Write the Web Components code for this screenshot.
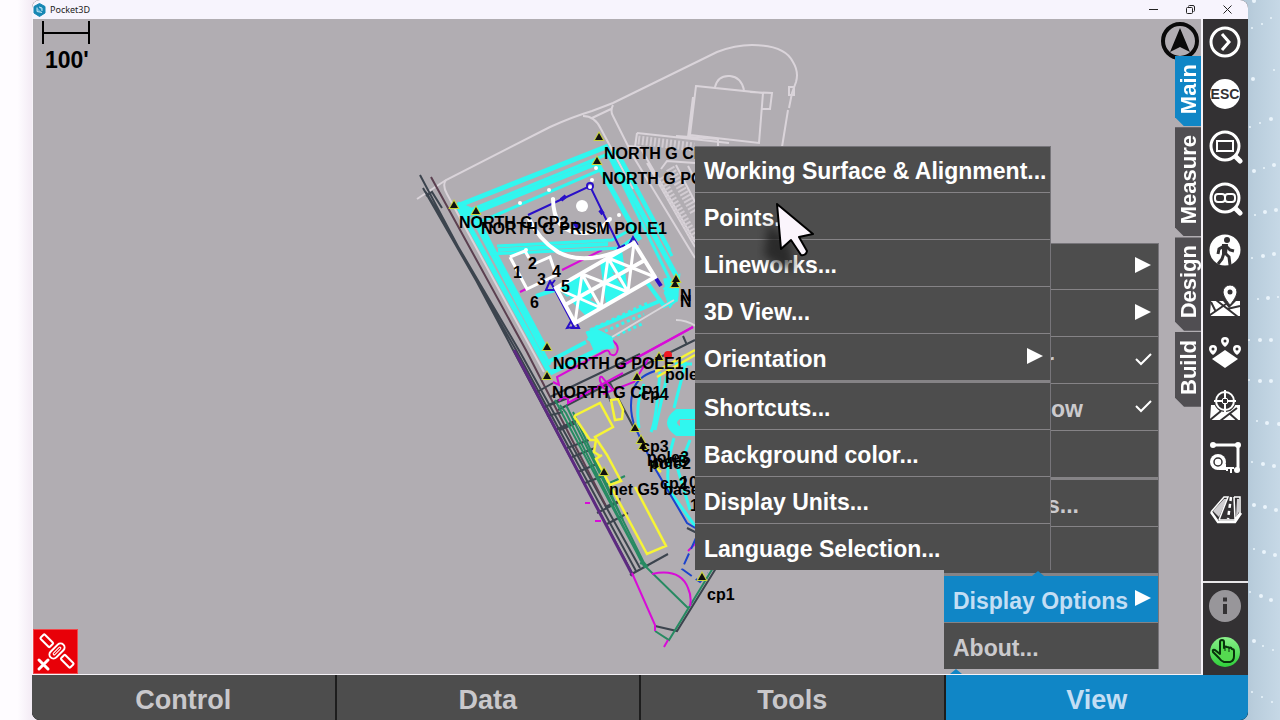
<!DOCTYPE html>
<html lang="en">
<head>
<meta charset="utf-8">
<title>Pocket3D</title>
<style>
  html, body { margin: 0; height: 100%; }
  body { font-family: "Liberation Sans", Arial, sans-serif; overflow: hidden; }
</style>
</head>
<body>
<p3-desktop>
  <p3-window>
    <p3-titlebar slot="title">Pocket3D</p3-titlebar>
    <p3-map slot="main">
      <p3-compass slot="compass"></p3-compass>
      <p3-side-tabs slot="tabs">
        <p3-side-tab active>Main</p3-side-tab>
        <p3-side-tab>Measure</p3-side-tab>
        <p3-side-tab>Design</p3-side-tab>
        <p3-side-tab>Build</p3-side-tab>
      </p3-side-tabs>
      <p3-gnss slot="status"></p3-gnss>
      <p3-menu slot="menu" label="View">
        <p3-item mark="arrow"></p3-item>
        <p3-item mark="arrow"></p3-item>
        <p3-item mark="check" class="under r">r</p3-item>
        <p3-item mark="check" class="under">ow</p3-item>
        <p3-item></p3-item>
        <p3-item section class="under s">s...</p3-item>
        <p3-item></p3-item>
        <p3-item section active mark="arrow">Display Options</p3-item>
        <p3-item>About...</p3-item>
      </p3-menu>
      <p3-menu slot="submenu" label="Display Options" bright>
        <p3-item>Working Surface &amp; Alignment...</p3-item>
        <p3-item>Points...</p3-item>
        <p3-item>Lineworks...</p3-item>
        <p3-item>3D View...</p3-item>
        <p3-item mark="arrow">Orientation</p3-item>
        <p3-item section>Shortcuts...</p3-item>
        <p3-item>Background color...</p3-item>
        <p3-item>Display Units...</p3-item>
        <p3-item>Language Selection...</p3-item>
        <p3-cursor slot="over"></p3-cursor>
      </p3-menu>
    </p3-map>
    <p3-toolbar slot="side">
      <p3-tool icon="next" label="Next"></p3-tool>
      <p3-tool icon="esc" label="Escape"></p3-tool>
      <p3-tool icon="zoomrect" label="Zoom window"></p3-tool>
      <p3-tool icon="zoomall" label="Zoom extents"></p3-tool>
      <p3-tool icon="walk" label="Follow me"></p3-tool>
      <p3-tool icon="mappin" label="Map point"></p3-tool>
      <p3-tool icon="pins" label="Surface points"></p3-tool>
      <p3-tool icon="target" label="Stake target"></p3-tool>
      <p3-tool icon="tape" label="Measure"></p3-tool>
      <p3-tool icon="road" label="Road"></p3-tool>
      <p3-tool icon="info" label="Information" slot="foot"></p3-tool>
      <p3-tool icon="hand" label="Touch mode" slot="foot"></p3-tool>
    </p3-toolbar>
    <p3-tabbar slot="foot">
      <p3-tab>Control</p3-tab>
      <p3-tab>Data</p3-tab>
      <p3-tab>Tools</p3-tab>
      <p3-tab active>View</p3-tab>
    </p3-tabbar>
  </p3-window>
</p3-desktop>

<script>
const define = (name, html, setup) => {
  const t = document.createElement('template');
  t.innerHTML = html;
  customElements.define(name, class extends HTMLElement {
    constructor() {
      super();
      this.attachShadow({ mode: 'open' }).append(t.content.cloneNode(true));
    }
    connectedCallback() { if (setup) setup(this, this.shadowRoot); }
  });
};

/* Wallpaper behind the window */
define('p3-desktop', `
<style>
  :host { display: block; position: relative; min-height: 100vh; background: #fdf9fe; }
  .right { position: absolute; inset: 0 0 0 auto; width: 44px;
    background: linear-gradient(90deg, #abc1d3, #b9cddc 40%, #c6d8e6); }
  .left { position: absolute; inset: 0 auto 0 0; width: 44px;
    background: linear-gradient(90deg, #fefcff 40%, #f2eaf4 75%); }
  slot { display: block; position: relative; padding: 0 32px; }
</style>
<div class="left"></div>
<svg class="right" viewBox="0 0 44 720" preserveAspectRatio="xMinYMin slice" fill="#eaf4fb" aria-hidden="true"></svg>
<slot></slot>`, (el, root) => {
  const dots = [[35,18,1],[16,28,1],[26,24,1],[38,70,1],[17,79,2],[14,127,1],[24,123,1],[35,119,2],[18,171,2],[28,168,1],[38,165,2],
    [18,1,2],[19,215,1],[29,212,2],[40,210,2],[16,258,1],[27,256,2],[38,254,2],[22,299,1],[32,298,2],[42,297,1],
    [13,340,1],[24,340,2],[35,340,2],[13,380,1],[24,381,2],[35,381,2],[21,421,1],[31,423,2],[43,424,2],
    [16,462,1],[27,464,2],[38,466,2],[18,505,2],[29,507,2],[40,510,2],[18,549,1],[28,552,2],[39,555,2],
    [14,592,1],[25,596,2],[35,600,2],[18,641,2],[27,646,1],[37,650,1],[16,692,1],[26,697,1],[36,702,1]];
  root.querySelector('svg').innerHTML = dots.map(d => `<circle cx="${d[0]}" cy="${d[1]}" r="${d[2]}"/>`).join('');
});

/* Application window: title, work area, tool column, tab bar */
define('p3-window', `
<style>
  :host { display: grid; min-height: 100vh; grid-template: auto 1fr auto / 1fr 45px;
    border-radius: 8px; overflow: hidden; background: #303030; }
  ::slotted([slot=title]), ::slotted([slot=foot]) { grid-column: 1 / -1; }
</style>
<slot name="title"></slot><slot name="main"></slot><slot name="side"></slot><slot name="foot"></slot>`);

define('p3-titlebar', `
<style>
  :host { display: flex; align-items: center; height: 19px; background: #f7f4fd; color: #222;
    font: 9px/18px "Noto Sans", "Open Sans", sans-serif; }
  .logo { margin: 0 4px 0 1px; }
  .grow { flex: 1; }
  button { width: 37px; height: 18px; padding: 0; border: 0; background: none; display: grid; place-items: center; }
  .end { display: flex; padding-right: 2px; }
  svg { display: block; fill: none; stroke: #222; }
</style>
<svg class="logo" width="13" height="14" viewBox="0 0 13 14" stroke="none"><path d="M6.500 .5 12 3.500v6.500L6.500 13.500 1 10V3.500z" fill="#1787b4" stroke="#1787b4"/><path d="M4 4.500v4l5 1M6 4l3 1v3" stroke="#bfe2f1" fill="#5fb4d8"/></svg>
<span><slot></slot></span><span class="grow"></span>
<div class="end">
<button aria-label="Minimize"><svg width="9" height="9"><path d="M0 4.500h9"/></svg></button>
<button aria-label="Restore"><svg width="9" height="9"><rect x=".5" y="2.500" width="6" height="6" rx="1"/><path d="M2.500 1.500q0-1 1-1h3.500q1.500 0 1.500 1.500v3.500q0 1-1 1"/></svg></button>
<button aria-label="Close"><svg width="9" height="9"><path d="M.5 .5l8 8M8.500 .5l-8 8"/></svg></button>
</div>`);

define('p3-map', `
<style>
  :host { display: block; position: relative; background: #b1adb2; overflow: hidden;
    border: solid #f6f3f8; border-width: 0 2px 1px 1px; }
  svg { display: block; position: absolute; left: 0; top: 0; }
  slot[name]::slotted(*) { position: absolute; }
  ::slotted([slot=compass]) { right: 2px; top: 3px; }
  ::slotted([slot=tabs]) { right: 0; top: 37px; }
  ::slotted([slot=status]) { left: 0; bottom: 0; }
  ::slotted([slot=menu]) { right: 42px; bottom: 5px; width: 215px; }
  ::slotted([slot=submenu]) { right: 150px; bottom: 104px; width: 356px; }
  .notch { position: absolute; width: 0; height: 0; border: 6px solid transparent; border-top: 0; border-bottom: 5px solid #1086c6; }
  .n1 { right: 239px; bottom: 0; }
  .n2 { right: 157px; bottom: 98px; }
  text { font: bold 16px "Liberation Sans", Arial, sans-serif; fill: #000; stroke: none; }
  .scale text { font-size: 23px; }
</style>
<svg width="780" height="655" viewBox="33 19 780 655" fill="none" role="img" aria-label="Site drawing">
  <g class="scale" stroke="#000" stroke-width="2"><path d="M43 21v23M89 21v23M43 33h46"/><text x="45" y="68">100'</text></g>

  <g stroke="#dad4da" stroke-width="2">
    <path d="M417 199 446 180 550 127Q572 117 592 111L613 103 717 52Q735 45 752 45 785 45 793 62 799 72 796 82L792 93 789 108M788 110 782 147"/>
    <path d="M789 87h5v8h-5zM583 116q12 0 18 13l32 60M592 118l19-9M613 105q-3 6 0 11l20 40 62 102" />
    <path d="M446 180q-4 5 1 14l97 178M696 86l67 7-4 50-69-8zM693 97l-5 40M750 92l22 1-2 16h-8M715 87q3-12 15-11 11 1 14 14"/>
    <path d="M637 133l92 10M637 133l-2 14M676 136l42 3v8M628 146l12 1 55 95M647 163l48 84"/>
    <path d="M661 169l6-8 28 2M676 165l19 37M688 166l7 13" />
  </g>
  <g stroke="#d2ccd2" stroke-width="9" stroke-dasharray="2 2"><path d="M638 140l56 7M660 178l36 62M670 168l25 45"/></g>

  <g stroke="#3c444e" stroke-width="2">
    <path d="M420 175 512 348 632 573M423 188 516 350 636 571M426 192 520 352 640 568"/>
    <path stroke="#5b4050" d="M431 177 527 352 606 506"/>
    <path d="M426 196l6-4 10 16" />
    <path d="M537 392l16-9M543 408l24-12M547 416l16-4M555 430l22-10M560 430l16-7M567 448l22-8M572 457l23-9M578 472l21-9M585 483l18-7M597 513l22-11 1-4M607 524l21-11M605 507l14-6"/>
    <path d="M550 405 610 382 695 340M550 397 640 354M610 383 635 430M558 410l52-27M683 336l4 9M605 388l6 14"/>
    <path d="M630 575 668 554M655 626l22 5 41-66M687 528l12 6"/>
  </g>
  <path d="M514 350 633 576" stroke="#5c2a80" stroke-width="3"/>
  <g stroke="#278a62" stroke-width="2">
    <path d="M560 405l6 8 75 148M566 405l80 162 42 41M573 412l50 108M655 631l14 9 44-72M555 400l90 168M605 485l20-9M640 563l6 2-4-5"/>
  </g>
  <g stroke="#d80cd8" stroke-width="2">
    <path d="M632 573 655 625 655 631M562 270 602 250M520 292l8-4M652 574q28-6 36 14 4 9 2 18M668 640l-4 7M697 542l-9 9M590 503h-5M601 521h-6"/>
    <path d="M693 327 618 368 M553 382l6 3-2-8 48-26q4-2 5 3 5 3 7-2 3-6-5-12M613 390l-11-13q-3-1-2 4l4 8M559 401q4-6 9-2v4l55-30M603 394l31-12 15-24"/>
    <path d="M693 327 618 368"/>
  </g>

  <g stroke="#30f7ef">
    <path stroke-width="5" d="M457 206 606 147 677 277M475 212 597 163 640 240M458 206 550 373M474 212 493 250 546 350M550 373 600 349"/>
    <path stroke-width="3" d="M463 213 608 154 672 284M472 217 550 365M480 222 600 170M615 150 672 256M622 160l48 90M630 230l-18 10-115 6M490 254l130-6 16-12"/>
    <path stroke-width="4" d="M548 362l38-20M498 250l110-6M536 296l28-9M592 330l70-30M664 290l14-12-2 22-12 6-18-25"/>
    <path stroke-width="6" d="M666 278l6 26M588 337l16 8M560 290l30-14M580 305l60-30"/>
    <path stroke-width="3" stroke-dasharray="3 3" d="M590 330l60-28M594 336l50-22M606 340l36-16"/>
    <path fill="#30f7ef" d="M586 332l10-3 16 8 2 11-20 2zM664 292l12-4 2 8-8 12zM480 212l-22-10 4 16z" stroke-width="1"/>
    <path stroke-width="3" d="M644 384q-9 20-5 44M660 372q-4 50-9 60M675 364h17M686 362l-12 46M655 430l12-54M674 438q-9 30-5 52l26 36M690 440l-12 30 12 40"/>
    <path stroke-width="10" d="M698 414H678q-12 9 0 17h20"/><path stroke-width="6" d="M698 423H680"/>
  </g>
  <path d="M674 300 612 337M676 320q10 0 20 6" stroke="#d9d6da" stroke-width="2"/>

  <g stroke="#2a10c8" stroke-width="2">
    <path d="M528 215 590 186 620 248M557 287 634 243M555 290 574 326M650 280l-60 35"/>
    <path d="M546 290l4-9 5 9zM551 285l4-5M567 328l4-7 3 6zM572 328l4-6 3 6zM629 245l4-8 4 7zM617 249l8-4"/>
    <path d="M561 200l5-4M600 210l3 4M574 222l4 6M655 277l6 9" stroke-width="4"/>
    <circle cx="590" cy="186" r="3"/>
  </g>
  <path d="M556 288 634 243 655 277 575 323z" fill="#b1adb2"/>
  <path d="M558 288l26-14 16 34-14 8zM600 262l22-12 6 42-22 12z" fill="#30f7ef"/>
  <path d="M562 298l8-2 2 12zM590 300l6-8 2 12zM612 272l6 2 4 12z" fill="#b1adb2"/>
  <g stroke="#fff" stroke-width="3">
    <path stroke-width="4" d="M556 288 634 243 655 277 575 323zM565 305 645 260"/>
    <path d="M582 274 601 308M608 258 628 292M556 288 601 308M575 323 582 274M582 274 628 292M601 308 608 258M608 258 655 277M628 292 634 243"/>
    <path d="M510 257 527 289 556 275 550 257 534 264M510 257l15-6 4 7"/>
  </g>
  <path d="M553 198q0 17 7 26 9 10 26 9 14-1 24-14M528 217q10 22 30 35 26 14 65-3" stroke="#fff" stroke-width="4"/>
  <g fill="#fff"><circle cx="582" cy="206" r="6"/><circle cx="520" cy="203" r="2"/><circle cx="549" cy="190" r="2"/><circle cx="553" cy="199" r="2"/><circle cx="592" cy="180" r="2"/><circle cx="596" cy="168" r="2"/><circle cx="590" cy="187" r="2"/><circle cx="619" cy="215" r="2"/><circle cx="610" cy="219" r="2"/><circle cx="526" cy="250" r="2"/></g>

  <g stroke="#f6f436" stroke-width="2.500">
    <path d="M574 416 600 403 613 427 595 437 607 455 621 481 610 485 596 459 602 455M574 416 590 440 596 440 594 452 600 456M610 485 647 554 666 546 635 487M611 400l4 20 7-1 1-9-5-11zM655 372 695 350M657 377 695 355M653 466l8 6"/>
  </g>
  <g stroke="#1c44cc" stroke-width="2">
    <path d="M655 371q-20 6-23 24-3 16 3 32l18 38 34 58 10 6"/>
    <path stroke-dasharray="12 5" d="M696 538l-14 31 18 13 8-9"/>
  </g>
  <circle cx="668" cy="355" r="4" fill="#f01822"/>
  <path id="marks" fill="#101010" stroke="#c9d43a" stroke-width="2" paint-order="stroke"/>
  <g id="labels"></g>
</svg>
<i class="notch n1"></i>
<slot name="compass"></slot><slot name="tabs"></slot><slot name="status"></slot>
<slot name="menu"></slot><i class="notch n2"></i><slot name="submenu"></slot>`, (el, root) => {
  const marks = [[599,137],[597,161],[454,205],[476,211],[676,279],[675,284],[547,347],[547,376],[659,357],[637,377],[635,428],[641,440],[643,446],[604,472],[655,464],[702,577]];
  root.getElementById('marks').setAttribute('d', marks.map(([x, y]) => `M${x} ${y - 4}l4 7h-8z`).join(''));
  const labels = [['NORTH G CP',604,159],['NORTH G PO',602,184],['NORTH G CP2',459,228],['NORTH G PRISM POLE1',481,234],
    ['1',513,278],['2',528,269],['3',537,285],['4',552,277],['5',561,292],['6',530,308],['N',680,301],['N',680,307],
    ['NORTH G POLE1',553,369],['NORTH G CP1',552,398],['cp4',641,400],['pole',665,380],['cp3',641,452],
    ['pole3',647,463],['pole2',649,469],['net5',654,467],['cp2',660,489],['10',680,488],['net G5 base',609,495],['1',690,511],['cp1',707,600]];
  root.getElementById('labels').innerHTML = labels.map(([s, x, y]) => `<text x="${x}" y="${y}">${s}</text>`).join('');
});

define('p3-compass', `
<style>:host { display: block; } button { display: block; padding: 0; border: 0; background: none; } svg { display: block; }</style>
<button aria-label="North up"><svg width="38" height="38" viewBox="0 0 38 38"><circle cx="19" cy="19" r="17" fill="none" stroke="#0a0a0a" stroke-width="4"/><path d="M19 6 29 30 19 25 9 30z" fill="#0a0a0a"/></svg></button>`);

define('p3-side-tabs', `<style>:host { display: flex; flex-direction: column; gap: 1px; }</style><slot></slot>`);
define('p3-side-tab', `
<style>
  :host { display: block; width: 26px; }
  button { width: 100%; border: 0; padding: 8px 0 12px 2px; background: #504e52; color: #fff;
    font: bold 22px/24px "Liberation Sans", Arial, sans-serif;
    clip-path: polygon(0 0, 100% 0, 100% 100%, 9px 100%, 0 calc(100% - 9px)); display: block; }
  :host([active]) button { background: #1086c6; }
  span { display: block; writing-mode: vertical-rl; transform: rotate(180deg); }
</style>
<button><span><slot></slot></span></button>`);

define('p3-gnss', `
<style>:host { display: block; } button { display: block; padding: 0; border: 0; } svg { display: block; background: #e80008; }</style>
<button aria-label="No satellite fix"><svg width="45" height="45" viewBox="0 0 45 45" fill="none" stroke="#fff" stroke-width="2"><rect x=".5" y=".5" width="44" height="44" stroke="#f0484c" stroke-width="1"/>
<g transform="rotate(45 24 22)"><rect x="3" y="19" width="13" height="6" rx="1"/><rect x="32" y="19" width="13" height="6" rx="1"/><rect x="20" y="13" width="8" height="18" rx="4"/><rect x="23" y="17" width="2" height="10" rx="1" stroke-width="1"/></g>
<path d="M6 31l9 9M15 31l-9 9" stroke-width="3" stroke-linecap="round"/></svg></button>`);

define('p3-menu', `
<style>
  :host { display: block; color: #cbcacd; }
  :host([bright]) { color: #fff; }
  nav { display: flex; flex-direction: column; gap: 1px; background: #858386; position: relative; }
  nav::after { content: ""; position: absolute; inset: 0; border: solid #77757a; border-width: 1px 1px 0 0; pointer-events: none; }
  ::slotted([section]) { margin-top: 2px; }
  ::slotted([slot=over]) { position: absolute; left: 62px; top: 53px; }
</style>
<nav><slot></slot><slot name="over"></slot></nav>`, (el, root) => root.querySelector('nav').setAttribute('aria-label', el.getAttribute('label')));

define('p3-item', `
<style>
  :host { display: block; }
  :host(.under) { --indent: 107px; }
  :host(.s) { --indent: 103px; }
  :host(.r) { --indent: 101px; }
  button { display: flex; align-items: center; justify-content: space-between; width: 100%; height: 46px;
    border: 0; padding: 4px 7px 0 var(--indent, 9px); background: #4d4d4d; color: inherit; text-align: left;
    font: bold 23px/26px "Liberation Sans", Arial, sans-serif; white-space: nowrap; }
  :host([active]) button { background: #1086c6; color: #c3def4; }
  svg { display: none; flex: none; margin-bottom: 6px; }
  :host([mark=arrow]) .arrow, :host([mark=check]) .check { display: block; }
</style>
<button><span><slot></slot></span>
<svg class="arrow" width="17" height="18"><path d="M0 1 16 9 0 17z" fill="#fff"/></svg>
<svg class="check" width="17" height="14"><path d="M1 7l5 5L16 2" fill="none" stroke="#fff" stroke-width="2"/></svg>
</button>`, (el, root) => {
  if (!el.textContent.trim()) root.querySelector('button').setAttribute('aria-label', 'View option');
});

define('p3-cursor', `
<style>:host { display: block; pointer-events: none; } svg { display: block; } .sh { filter: blur(4px); }</style>
<svg width="64" height="80" viewBox="757 199 64 80" aria-hidden="true"><path class="sh" d="M768 224 788 240 795 270 780 266 764 256z" fill="#1c1c1c" opacity=".7"/>
<path d="M777 204 813 234 799 237 807 251Q806 256 801 255L791 240 781 249z" fill="#fbf5fc" stroke="#000" stroke-width="2" stroke-linejoin="round"/></svg>`);

define('p3-toolbar', `
<style>
  :host { display: flex; flex-direction: column; justify-content: space-between; background: #333133; }
  .top { display: flex; flex-direction: column; gap: 6px; }
  .foot { border-top: 2px solid #e8e6e8; }
</style>
<div class="top"><slot></slot></div><div class="foot"><slot name="foot"></slot></div>`);

/* Every icon is drawn on a 36 unit square centred in its button */
const ICONS = {
  next: '<circle cx="18" cy="18" r="14" fill="none" stroke="#fff" stroke-width="3"/><path d="M15 10l7 8-7 8" fill="none" stroke="#fff" stroke-width="3"/>',
  esc: '<circle cx="18" cy="18" r="15" fill="#fff"/><text x="18" y="23" text-anchor="middle">ESC</text>',
  zoomrect: '<g fill="none" stroke="#fff"><circle cx="18" cy="18" r="14" stroke-width="3"/><path d="M29 29l4 4" stroke-width="5" stroke-linecap="round"/><rect x="10" y="13" width="16" height="10" stroke-width="2"/></g>',
  zoomall: '<g fill="none" stroke="#fff"><circle cx="18" cy="18" r="14" stroke-width="3"/><path d="M29 29l4 4" stroke-width="5" stroke-linecap="round"/><rect x="8" y="14" width="10" height="8" rx="3" stroke-width="2"/><rect x="18" y="14" width="10" height="8" rx="3" stroke-width="2"/></g>',
  walk: '<circle cx="18" cy="18" r="15.500" fill="#fff"/><circle cx="20" cy="8" r="3" fill="#333133"/><path d="M18 13v9M17 14l-5 3-1 5M19 14l4 4 4 1M17 21l-2 6-4 5M18 21l4 4 1 8" fill="none" stroke="#333133" stroke-width="3"/><path d="M15 12h6l-1 10h-5z" fill="#333133"/>',
  mappin: '<path d="M4 17h12l6 7 7-7h4v15H4l-1-3z" fill="#fff"/><path d="M3 31l16-11M9 16l22 17M20 25l13-3M4 18l5 10" stroke="#333133" stroke-width="2" fill="none"/><path d="M23 1a7 7 0 0 1 7 7c0 5-7 13-7 13s-7-8-7-13a7 7 0 0 1 7-7z" fill="#fff" stroke="#333133"/><circle cx="23" cy="8" r="2.500" fill="#333133"/>',
  pins: '<path d="M18 14l13 9-13 9-13-9z" fill="#fff"/><g fill="#fff"><path d="M18 1a4 4 0 0 1 4 4c0 3-4 6-4 6s-4-3-4-6a4 4 0 0 1 4-4z"/><path d="M6 9a4 4 0 0 1 4 4c0 3-4 6-4 6s-4-3-4-6a4 4 0 0 1 4-4zM30 9a4 4 0 0 1 4 4c0 3-4 6-4 6s-4-3-4-6a4 4 0 0 1 4-4z"/></g><g fill="#333133"><circle cx="18" cy="5" r="1.500"/><circle cx="6" cy="13" r="1.500"/><circle cx="30" cy="13" r="1.500"/></g>',
  target: '<path d="M4 17h4l5 6h10l5-6h5v15H3z" fill="#fff"/><path d="M3 32l11-9M13 33l17-13M22 25l9 8" stroke="#333133" stroke-width="2"/><circle cx="18" cy="13" r="11" fill="#333133"/><g fill="none" stroke="#fff" stroke-width="2"><circle cx="18" cy="13" r="9"/><path d="M18 2v9M18 15v9M7 13h9M20 13h9"/></g><circle cx="18" cy="13" r="3" fill="none" stroke="#fff"/>',
  tape: '<g fill="#fff"><circle cx="6" cy="5" r="3"/><circle cx="31" cy="5" r="3"/><circle cx="30" cy="30" r="3"/></g><path d="M5 5h26v25" fill="none" stroke="#fff" stroke-width="3"/><circle cx="11" cy="22" r="8" fill="#fff"/><path d="M12 24h7v6h-7zM19 27h8v2h-2v4h-2v-4h-2v2h-2z" fill="#fff"/><circle cx="11" cy="22" r="4" fill="none" stroke="#333133" stroke-width="1.500"/>',
  road: '<path d="M6 19 17 7h3L12 25zM30 7h2v13l-3 5z" fill="#cfcdd0"/><path d="M4 20 17 5h4L12 28M27 5h6v16l-5 6-1-22M12 28h17" fill="none" stroke="#fff" stroke-width="1.500"/><path d="M4 20l7 10h17l6-9" fill="none" stroke="#fff" stroke-width="2.500"/><path d="M24 5l-3 22" stroke="#fff" stroke-width="2.500" stroke-dasharray="4 3"/>',
  info: '<circle cx="18" cy="18" r="16" fill="#98969a"/><path d="M18 9.500v4M18 16v10" stroke="#333133" stroke-width="4"/>',
  hand: '<defs><linearGradient id="g" x1="0" y1="0" x2="0" y2="1"><stop offset="0" stop-color="#8af08a"/><stop offset="1" stop-color="#2fd03a"/></linearGradient></defs><circle cx="18" cy="18" r="15" fill="url(#g)"/><path d="M13 20V8q0-2 2-2t2 2v6q1-2 3-1 2 0 2 1 2-1 3 1 2 0 2 2v5q0 5-4 6h-6q-3-1-5-4l-6-6q-1-3 2-2z" fill="#55da50" stroke="#08330c" stroke-width="2" stroke-linejoin="round"/><path d="M18 14v3M22 15v3" stroke="#08330c"/>'
};
define('p3-tool', `
<style>
  :host { display: block; }
  button { display: grid; place-items: center; width: 100%; height: 46px; padding: 0 1px 0 0; border: 0; background: none; }
  svg { display: block; }
  text { font: bold 14px "Liberation Sans", Arial, sans-serif; fill: #333133; }
</style>
<button><svg width="36" height="36" viewBox="0 0 36 36"></svg></button>`, (el, root) => {
  root.querySelector('svg').innerHTML = ICONS[el.getAttribute('icon')];
  root.querySelector('button').setAttribute('aria-label', el.getAttribute('label'));
});

define('p3-tabbar', `<style>:host { display: flex; background: #1d1d1d; gap: 2px; } ::slotted(*) { flex: 1; }</style><slot></slot>`);
define('p3-tab', `
<style>
  :host { display: block; }
  button { width: 100%; height: 45px; border: 0; padding: 4px 0 0; background: #4d4d4d; color: #c9c8cb;
    font: bold 27px/30px "Liberation Sans", Arial, sans-serif; display: block; }
  :host([active]) button { background: #1086c6; color: #c3def4; }
</style>
<button><slot></slot></button>`);
</script>
</body>
</html>
